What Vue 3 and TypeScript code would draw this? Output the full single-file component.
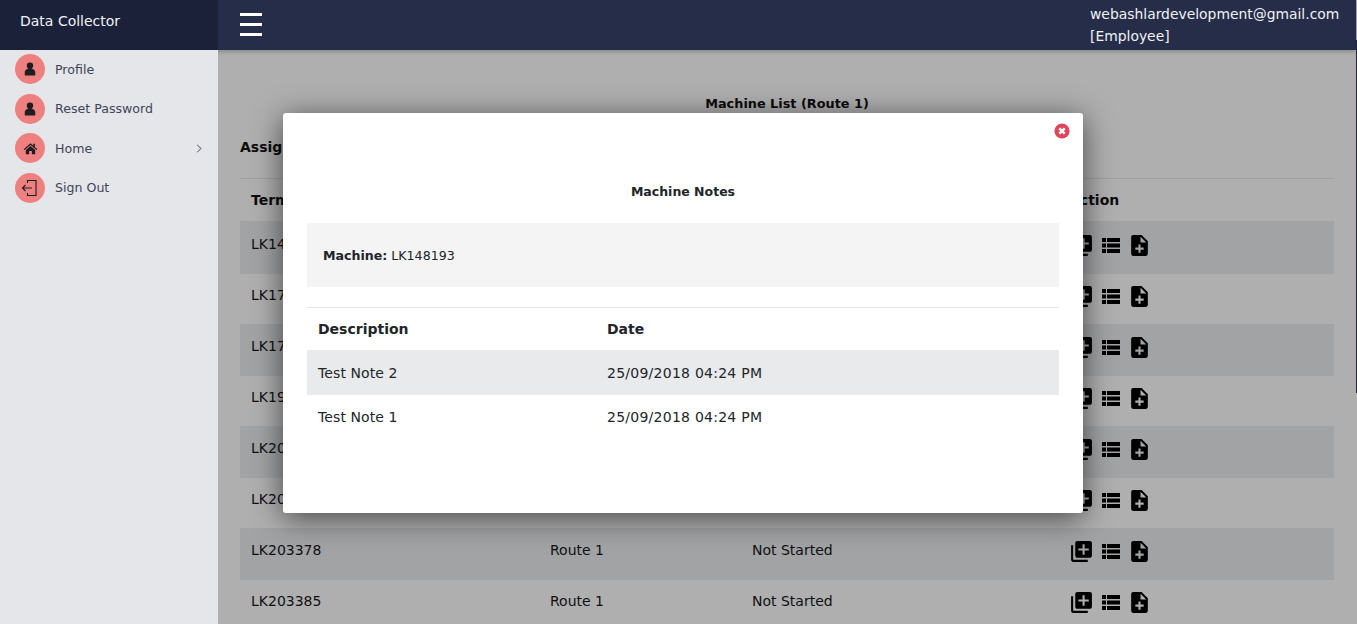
<script setup lang="ts">
interface Machine { id: string; route: string; status: string }
const machines: Machine[] = [
  { id: 'LK148193', route: 'Route 1', status: 'Not Started' },
  { id: 'LK170021', route: 'Route 1', status: 'Not Started' },
  { id: 'LK170145', route: 'Route 1', status: 'Not Started' },
  { id: 'LK190377', route: 'Route 1', status: 'Not Started' },
  { id: 'LK203112', route: 'Route 1', status: 'Not Started' },
  { id: 'LK203254', route: 'Route 1', status: 'Not Started' },
  { id: 'LK203378', route: 'Route 1', status: 'Not Started' },
  { id: 'LK203385', route: 'Route 1', status: 'Not Started' },
]
const notes = [
  { text: 'Test Note 2', date: '25/09/2018 04:24 PM' },
  { text: 'Test Note 1', date: '25/09/2018 04:24 PM' },
]
const userPath = 'M12 3.2a4.3 4.3 0 0 1 4.3 4.5c0 1.6-.8 3-2 3.8 2.9.5 4.7 2 4.7 4.6v3.4c0 .8-.6 1.3-1.3 1.3H6.3c-.7 0-1.3-.5-1.3-1.3v-3.4c0-2.6 1.8-4.1 4.7-4.6-1.2-.8-2-2.2-2-3.8A4.3 4.3 0 0 1 12 3.2z'
</script>

<template>
  <div class="page">
    <header class="topbar">
      <div class="brand">Data Collector</div>
      <button class="burger" aria-label="Menu"><span></span><span></span><span></span></button>
      <div class="account">
        <div>webashlardevelopment@gmail.com</div>
        <div>[Employee]</div>
      </div>
    </header>

    <div class="body">
      <aside class="sidebar">
        <a class="nav-item">
          <span class="badge"><svg viewBox="0 0 24 24" width="18" height="18"><path :d="userPath" /></svg></span>
          <span>Profile</span>
        </a>
        <a class="nav-item">
          <span class="badge"><svg viewBox="0 0 24 24" width="18" height="18"><path :d="userPath" /></svg></span>
          <span>Reset Password</span>
        </a>
        <a class="nav-item">
          <span class="badge"><svg viewBox="0 0 24 24" width="15" height="15"><path d="M12 3.5 1 13l1.3 1.5L12 6.2l9.7 8.3L23 13l-4-3.4V4.5h-2.6v2.9L12 3.5zM12 8 4.5 14.4V21h5.3v-5h4.4v5h5.3v-6.6L12 8z" /></svg></span>
          <span class="grow">Home</span>
          <svg class="chev" viewBox="0 0 8 12" width="6" height="9"><path d="M1.5 1 6.5 6l-5 5" fill="none" stroke="#6b7080" stroke-width="1.4" /></svg>
        </a>
        <a class="nav-item">
          <span class="badge"><svg class="line" viewBox="0 0 20 20" width="20" height="20"><path d="M7.5 5V2.5h8.5v15H7.5V15M12 10H2.5M5.5 7l-3 3 3 3" fill="none" stroke="#1d1d22" stroke-width="1.1" /></svg></span>
          <span>Sign Out</span>
        </a>
      </aside>

      <main class="content">
        <h2 class="list-title">Machine List (Route 1)</h2>
        <h3 class="assigned">Assigned Machines</h3>
        <div class="rule"></div>
        <div class="row head">
          <div class="c1">Terminal</div><div class="c2">Route</div><div class="c3">Status</div><div class="c4">Action</div>
        </div>
        <div v-for="m in machines" :key="m.id" class="row item">
          <div class="c1">{{ m.id }}</div>
          <div class="c2">{{ m.route }}</div>
          <div class="c3">{{ m.status }}</div>
          <div class="c4 actions">
            <svg viewBox="0 0 24 24" width="25" height="25"><path d="M4 6H2v14c0 1.1.9 2 2 2h14v-2H4V6zm16-4H8c-1.1 0-2 .9-2 2v12c0 1.1.9 2 2 2h12c1.1 0 2-.9 2-2V4c0-1.1-.9-2-2-2zm-1 9h-4v4h-2v-4H9V9h4V5h2v4h4v2z" /></svg>
            <svg viewBox="0 0 18 15" width="18" height="15"><path d="M0 0h4v4H0zM5 0h13v4H5zM0 5.5h4v4H0zM5 5.5h13v4H5zM0 11h4v4H0zM5 11h13v4H5z" /></svg>
            <svg viewBox="0 0 24 24" width="25" height="25"><path d="M14 2H6c-1.1 0-1.99.9-1.99 2L4 20c0 1.1.89 2 1.99 2H18c1.1 0 2-.9 2-2V8l-6-6zm2 14h-3v3h-2v-3H8v-2h3v-3h2v3h3v2zm-3-7V3.5L18.5 9H13z" /></svg>
          </div>
        </div>
      </main>
    </div>

    <div class="scrollbar"></div>
    <div class="overlay">
      <section class="modal">
        <div class="close-row">
          <svg viewBox="0 0 16 16" width="16" height="16"><circle cx="8" cy="8" r="7.6" fill="#e2445c" /><path d="M5.3 5.3l5.4 5.4M10.7 5.3l-5.4 5.4" stroke="#fff" stroke-width="2.4" /></svg>
        </div>
        <h4 class="modal-title">Machine Notes</h4>
        <div class="machine-panel"><b>Machine:</b> LK148193</div>
        <div class="modal-rule"></div>
        <div class="note-row note-head"><div class="n1">Description</div><div>Date</div></div>
        <div v-for="n in notes" :key="n.text" class="note-row note-item">
          <div class="n1">{{ n.text }}</div><div class="date">{{ n.date }}</div>
        </div>
      </section>
    </div>
  </div>
</template>

<style>
html, body { margin: 0; overflow: hidden; }
</style>

<style scoped>
.page {
  position: relative;
  height: 624px;
  overflow: hidden;
  background: #fbfbfb;
  font-family: "DejaVu Sans", Verdana, sans-serif;
  color: #212529;
}
.topbar {
  position: relative;
  z-index: 20;
  display: flex;
  align-items: center;
  height: 50px;
  margin-right: 1px;
  background: #252d48;
  color: #f1f2f5;
  box-shadow: 0 2px 4px rgba(0, 0, 0, .2);
}
.brand {
  width: 218px;
  height: 50px;
  padding-left: 20px;
  padding-top: 13px;
  box-sizing: border-box;
  background: #1b2139;
  font-size: 14px;
  line-height: 16px;
}
.burger {
  display: flex;
  flex-direction: column;
  gap: 7px;
  width: 22px;
  margin-left: 22px;
  margin-bottom: 2px;
  padding: 0;
  border: 0;
  background: none;
}
.burger span { display: block; height: 3px; background: #fff; }
.account {
  margin-left: auto;
  width: 266px;
  font-size: 13.9px;
  line-height: 22.5px;
}
.body { display: flex; height: 574px; }
.sidebar {
  position: relative;
  z-index: 20;
  display: flex;
  flex-direction: column;
  gap: 9.6px;
  flex: 0 0 218px;
  box-sizing: border-box;
  padding: 4px 15px 0;
  background: #e4e6ea;
  color: #3f4459;
  font-size: 12.6px;
}
.nav-item { display: flex; align-items: center; height: 30px; }
.badge {
  display: flex;
  align-items: center;
  justify-content: center;
  flex: 0 0 30px;
  height: 30px;
  margin-right: 10px;
  border-radius: 50%;
  background: #ee8080;
}
.badge svg { fill: #1d1d22; }
.badge svg.line { fill: none; }
.grow { flex: 1; }
.chev { margin-right: 1px; }
.content { flex: 1; padding: 46px 23px 0 22px; min-width: 0; }
.list-title {
  margin: 0;
  text-align: center;
  font-size: 12.85px;
  line-height: 16px;
  color: #111;
}
.assigned {
  margin: 26px 0 0;
  font-size: 14px;
  line-height: 18px;
  color: #111;
}
.rule { height: 1px; margin-top: 22px; background: #e4e4e4; }
.row { display: flex; font-size: 14px; line-height: 18px; color: #16181b; }
.head { height: 42px; padding-top: 12px; box-sizing: border-box; font-weight: 700; color: #111; }
.item { box-sizing: border-box; height: 50px; padding-top: 12px; }
.item:nth-child(odd) { height: 52px; padding-top: 13px; background: #e9eaec; }
.item:nth-child(5) { height: 53px; padding-top: 14px; }
.c1 { width: 310px; padding-left: 11px; box-sizing: border-box; }
.c2 { width: 202px; }
.c3 { width: 317px; }
.c4 { flex: 1; }
.actions { display: flex; align-items: center; gap: 7.5px; height: 25px; margin-top: -2px; }
.actions svg { fill: #000; }
.scrollbar {
  position: absolute;
  z-index: 25;
  top: 40px;
  right: 0;
  width: 1px;
  height: 353px;
  background: #1f2438;
}
.overlay {
  position: absolute;
  z-index: 10;
  inset: 0;
  display: flex;
  justify-content: center;
  align-items: flex-start;
  background: rgba(0, 0, 0, .3);
}
.modal {
  position: relative;
  left: 4.5px;
  box-sizing: border-box;
  width: 800px;
  height: 400px;
  margin-top: 113px;
  padding: 0 24px;
  border-radius: 3px;
  background: #fff;
  box-shadow: 0 5px 30px rgba(0, 0, 0, .6);
  color: #212529;
}
.close-row { display: flex; justify-content: flex-end; height: 71px; padding: 10px 0 0; box-sizing: border-box; margin-right: -11px; }
.modal-title {
  margin: 0;
  text-align: center;
  font-size: 12.5px;
  line-height: 16px;
}
.machine-panel {
  display: flex;
  align-items: center;
  gap: 4px;
  height: 64px;
  margin-top: 23px;
  padding-left: 16px;
  background: #f4f4f4;
  font-size: 12.6px;
}
.modal-rule { height: 1px; margin-top: 20px; background: #e6e6e6; }
.note-row { display: flex; align-items: center; padding-left: 11px; font-size: 14px; }
.n1 { width: 289px; }
.date { letter-spacing: .25px; }
.note-head { height: 42px; font-weight: 700; }
.note-item { height: 43px; letter-spacing: .1px; }
.note-row:nth-child(6) { height: 45px; background: #e9eaec; }
</style>
